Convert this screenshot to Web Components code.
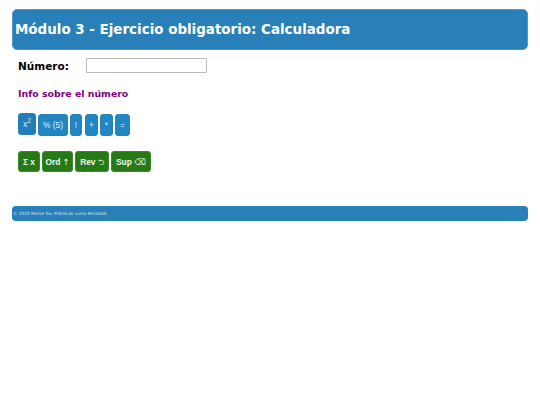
<!DOCTYPE html>
<html lang="es">
<head>
<meta charset="utf-8">
<title>Calculadora</title>
<style>
  html, body { margin: 0; background: #fff; }
  body { font-family: "DejaVu Sans", sans-serif; }
</style>
</head>
<body>
<calc-page>
  <calc-banner>Módulo 3 - Ejercicio obligatorio: Calculadora</calc-banner>
  <calc-input label="Número:"></calc-input>
  <calc-info>Info sobre el número</calc-info>
  <calc-row>
    <calc-btn style="width:18px;margin-top:-1px;background:#1f7dba;font-size:9px">x<sup>2</sup></calc-btn>
    <calc-btn style="width:30px">% (5)</calc-btn>
    <calc-btn style="width:12px">!</calc-btn>
    <calc-btn style="width:13px;margin-left:1px">+</calc-btn>
    <calc-btn style="width:13px">*</calc-btn>
    <calc-btn style="width:15px">=</calc-btn>
  </calc-row>
  <calc-row kind="green">
    <calc-btn kind="green" style="width:22px">Σ x</calc-btn>
    <calc-btn kind="green" style="width:31px">Ord <calc-glyph>↑</calc-glyph></calc-btn>
    <calc-btn kind="green" style="width:34px">Rev <calc-glyph>⮌</calc-glyph></calc-btn>
    <calc-btn kind="green" style="width:40px">Sup <calc-glyph>⌫</calc-glyph></calc-btn>
  </calc-row>
  <calc-footer>© 2020 Morse Sw. Prácticas curso MiríadaX.</calc-footer>
</calc-page>

<script>
class CalcPage extends HTMLElement {
  constructor() {
    super();
    this.attachShadow({ mode: 'open' });
    this.shadowRoot.innerHTML = `
      <style>
        :host { display: block; padding: 9px 12px 0; }
      </style>
      <slot></slot>
    `;
  }
}

class CalcBanner extends HTMLElement {
  constructor() {
    super();
    this.attachShadow({ mode: 'open' });
    this.shadowRoot.innerHTML = `
      <style>
        :host {
          display: flex;
          align-items: center;
          box-sizing: border-box;
          height: 41px;
          padding-left: 2px;
          background: #2980b9;
          border: 1px solid #4f9acb;
          border-radius: 5px;
          color: #fff;
          font-size: 13.44px;
          font-weight: bold;
        }
      </style>
      <slot></slot>
    `;
  }
}

class CalcInput extends HTMLElement {
  constructor() {
    super();
    this.attachShadow({ mode: 'open' });
    this.shadowRoot.innerHTML = `
      <style>
        :host {
          display: flex;
          align-items: center;
          height: 15px;
          margin: 8px 0 0 6px;
          font-size: 10.5px;
          font-weight: bold;
          color: #000;
        }
        label { width: 68px; }
        input {
          box-sizing: border-box;
          width: 121px;
          height: 15px;
          margin: 0;
          padding: 0 2px;
          background: #fff;
          border: 1px solid #bbb;
          border-radius: 1px;
        }
      </style>
      <label></label><input type="text">
    `;
    this.shadowRoot.querySelector('label').textContent = this.getAttribute('label');
  }
}

class CalcInfo extends HTMLElement {
  constructor() {
    super();
    this.attachShadow({ mode: 'open' });
    this.shadowRoot.innerHTML = `
      <style>
        :host {
          display: block;
          margin: 14px 0 0 6px;
          height: 14px;
          line-height: 14px;
          font-size: 9.4px;
          font-weight: bold;
          color: #800080;
        }
      </style>
      <slot></slot>
    `;
  }
}

class CalcRow extends HTMLElement {
  constructor() {
    super();
    this.attachShadow({ mode: 'open' });
    this.shadowRoot.innerHTML = `
      <style>
        :host {
          display: flex;
          align-items: flex-start;
          gap: 2px;
          margin: 13px 0 0 6px;
        }
        :host([kind="green"]) { margin-top: 15px; }
      </style>
      <slot></slot>
    `;
  }
}

class CalcBtn extends HTMLElement {
  constructor() {
    super();
    this.attachShadow({ mode: 'open' });
    this.shadowRoot.innerHTML = `
      <style>
        :host {
          display: flex;
          align-items: center;
          justify-content: center;
          height: 22px;
          box-sizing: border-box;
          background: #2187c4;
          border: 1px solid #2a7fb6;
          border-radius: 3px;
          color: #dcedf8;
          font-family: "Liberation Sans", sans-serif;
          font-size: 8.4px;
          line-height: 10px;
          white-space: nowrap;
        }
        :host([kind="green"]) {
          height: 21px;
          background: #267a16;
          border-color: #3a8a2c;
          color: #f2f8f0;
          font-size: 8.4px;
          font-weight: bold;
        }
        ::slotted(sup) { font-size: 6.5px; line-height: 0; }
      </style>
      <span><slot></slot></span>
    `;
  }
}

class CalcGlyph extends HTMLElement {
  constructor() {
    super();
    this.attachShadow({ mode: 'open' });
    this.shadowRoot.innerHTML = `
      <style>
        :host {
          display: inline;
          font-family: "DejaVu Sans", sans-serif;
          font-weight: normal;
          line-height: 0;
        }
      </style>
      <slot></slot>
    `;
  }
}

class CalcFooter extends HTMLElement {
  constructor() {
    super();
    this.attachShadow({ mode: 'open' });
    this.shadowRoot.innerHTML = `
      <style>
        :host {
          display: flex;
          align-items: center;
          height: 15px;
          margin-top: 34px;
          padding-left: 1px;
          background: #2980b9;
          border-radius: 4px;
          color: #d4e6f3;
          font-size: 4.3px;
        }
      </style>
      <slot></slot>
    `;
  }
}

customElements.define('calc-page', CalcPage);
customElements.define('calc-banner', CalcBanner);
customElements.define('calc-input', CalcInput);
customElements.define('calc-info', CalcInfo);
customElements.define('calc-row', CalcRow);
customElements.define('calc-btn', CalcBtn);
customElements.define('calc-glyph', CalcGlyph);
customElements.define('calc-footer', CalcFooter);
</script>
</body>
</html>
